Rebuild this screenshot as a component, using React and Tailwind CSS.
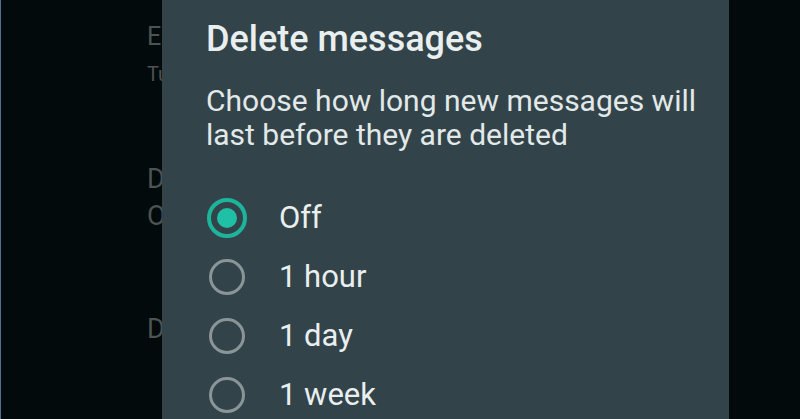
export default function App() {
  const options = [
    { label: "Off", selected: true },
    { label: "1 hour" },
    { label: "1 day" },
    { label: "1 week" },
  ];
  return (
    <div
      className="relative flex h-[419px] w-[800px] overflow-hidden bg-[#020a0b]"
      style={{ fontFamily: "Roboto, 'Noto Sans', sans-serif" }}
    >
      <div className="relative w-[162px] shrink-0 overflow-hidden border-l border-[#4f6f8f] bg-[#020a0b]">
        <div className="absolute left-[-1px] top-[350px] h-[22px] w-px bg-[#e8b400]" />
        <div className="flex flex-col whitespace-nowrap pl-[146px] text-[#4d5252]">
          <div className="mt-[22px] text-[25px] leading-[30px]">Ephemeral</div>
          <div className="mt-[10px] text-[20px] leading-[24px]">Turn on</div>
          <div className="mt-[78px] text-[27px] leading-[30px]">Default</div>
          <div className="mt-[7px] text-[27px] leading-[30px]">Off</div>
          <div className="mt-[83px] text-[27px] leading-[30px]">Display</div>
        </div>
      </div>
      <div className="w-[567px] shrink-0 bg-[#33434a] pl-[44px] pt-[19px] text-[#e9efef]">
        <div className="whitespace-nowrap text-[36px] font-medium leading-[40px]">Delete messages</div>
        <div className="mt-[25px] whitespace-nowrap text-[30px] leading-[34px] text-[#e2e9e9]">
          Choose how long new messages will
          <br />
          last before they are deleted
        </div>
        <div className="mt-[36px] flex flex-col">
          {options.map((o) => (
            <div key={o.label} className="flex h-[59px] items-center">
              <div className="flex w-[42px] justify-center">
                {o.selected ? (
                  <div className="flex h-[40px] w-[40px] items-center justify-center rounded-full border-[4px] border-[#1db49c]">
                    <div className="h-[20px] w-[20px] rounded-full bg-[#1fc0a6]" />
                  </div>
                ) : (
                  <div className="h-[36px] w-[36px] rounded-full border-[3px] border-[#8a9597]" />
                )}
              </div>
              <div className="ml-[31px] whitespace-nowrap text-[31px] leading-[40px]">{o.label}</div>
            </div>
          ))}
        </div>
      </div>
      <div className="flex-1 bg-[#020a0b]" />
    </div>
  );
}
